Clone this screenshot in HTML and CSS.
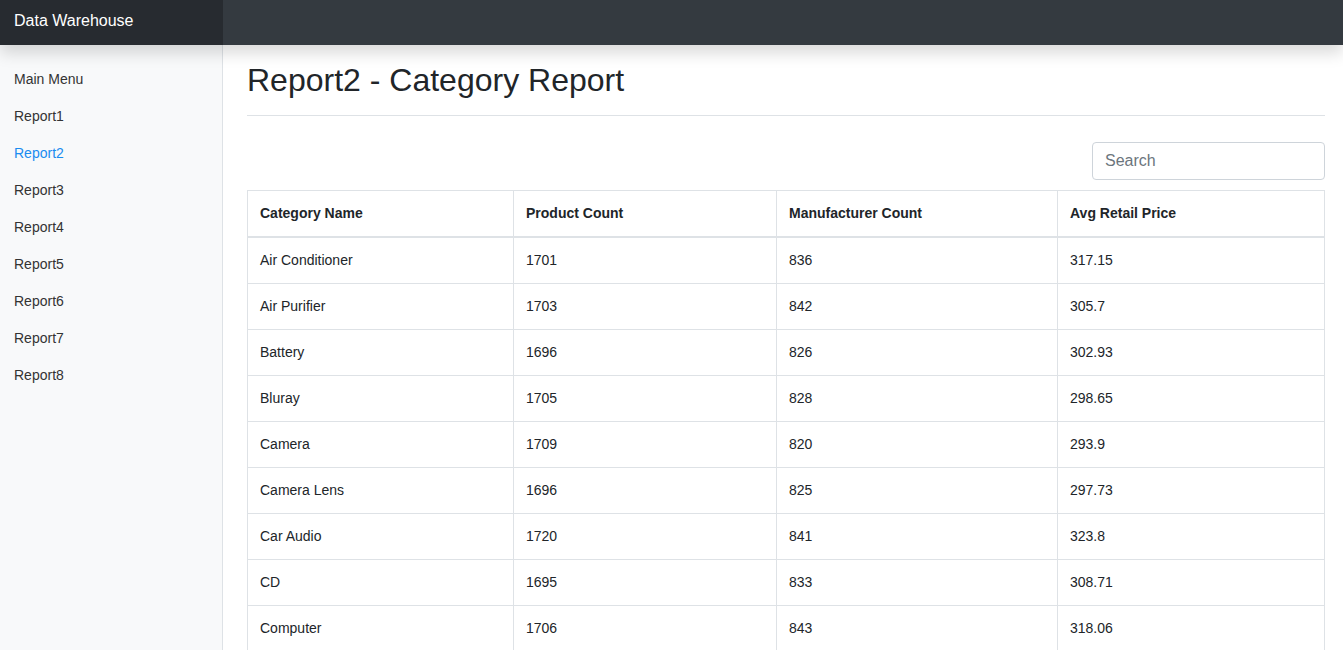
FILE: index.html
```html
<!DOCTYPE html>
<html lang="en">
<head>
<meta charset="utf-8">
<title>Data Warehouse</title>
<link rel="stylesheet" href="styles.css">
</head>
<body>
<header class="navbar">
  <a class="brand" href="#">Data Warehouse</a>
</header>
<div class="layout">
  <nav class="sidebar">
    <ul class="nav">
      <li><a class="nav-link" href="#">Main Menu</a></li>
      <li><a class="nav-link" href="#">Report1</a></li>
      <li><a class="nav-link active" href="#">Report2</a></li>
      <li><a class="nav-link" href="#">Report3</a></li>
      <li><a class="nav-link" href="#">Report4</a></li>
      <li><a class="nav-link" href="#">Report5</a></li>
      <li><a class="nav-link" href="#">Report6</a></li>
      <li><a class="nav-link" href="#">Report7</a></li>
      <li><a class="nav-link" href="#">Report8</a></li>
    </ul>
  </nav>
  <main class="main">
    <div class="page-header">
      <h2 class="title">Report2 - Category Report</h2>
    </div>
    <div class="toolbar">
      <input class="search" type="text" placeholder="Search">
    </div>
    <table class="table">
      <thead>
        <tr><th>Category Name</th><th>Product Count</th><th>Manufacturer Count</th><th>Avg Retail Price</th></tr>
      </thead>
      <tbody>
        <tr><td>Air Conditioner</td><td>1701</td><td>836</td><td>317.15</td></tr>
        <tr><td>Air Purifier</td><td>1703</td><td>842</td><td>305.7</td></tr>
        <tr><td>Battery</td><td>1696</td><td>826</td><td>302.93</td></tr>
        <tr><td>Bluray</td><td>1705</td><td>828</td><td>298.65</td></tr>
        <tr><td>Camera</td><td>1709</td><td>820</td><td>293.9</td></tr>
        <tr><td>Camera Lens</td><td>1696</td><td>825</td><td>297.73</td></tr>
        <tr><td>Car Audio</td><td>1720</td><td>841</td><td>323.8</td></tr>
        <tr><td>CD</td><td>1695</td><td>833</td><td>308.71</td></tr>
        <tr><td>Computer</td><td>1706</td><td>843</td><td>318.06</td></tr>
      </tbody>
    </table>
  </main>
</div>
</body>
</html>
```
FILE: styles.css
```css
* { box-sizing: border-box; }
html, body { margin: 0; padding: 0; }
body {
  font-family: "Liberation Sans", Arial, sans-serif;
  font-size: 16px;
  color: #212529;
  background: #fff;
  overflow: hidden;
}
.navbar {
  position: relative;
  z-index: 10;
  height: 45px;
  display: flex;
  background: #343a40;
  box-shadow: 0 8px 16px rgba(0,0,0,0.15);
}
.brand {
  width: 223px;
  padding: 12px 14px 0;
  line-height: 18px;
  background: rgba(0,0,0,0.25);
  color: #fff;
  font-size: 16px;
  text-decoration: none;
}
.layout {
  display: flex;
  min-height: 605px;
}
.sidebar {
  width: 223px;
  flex: none;
  background: #f8f9fa;
  border-right: 1px solid #dee2e6;
  padding-top: 16px;
}
.nav { list-style: none; margin: 0; padding: 0; }
.nav-link {
  display: block;
  padding: 8px 14px;
  font-size: 14px;
  line-height: 21px;
  color: #333;
  text-decoration: none;
}
.nav-link.active { color: #1a8cf0; }
.main {
  flex: 1;
  padding: 16px 18px 0 24px;
}
.page-header {
  border-bottom: 1px solid #dee2e6;
  padding-bottom: 8px;
  margin-bottom: 26px;
}
.title {
  margin: 0 0 8px;
  font-size: 32px;
  font-weight: 500;
  line-height: 38px;
}
.toolbar {
  display: flex;
  justify-content: flex-end;
  margin-bottom: 10px;
}
.search {
  width: 233px;
  height: 38px;
  padding: 6px 12px;
  font-family: inherit;
  font-size: 16px;
  color: #495057;
  border: 1px solid #ced4da;
  border-radius: 4px;
  background: #fff;
}
.search::placeholder { color: #6c757d; }
.table {
  width: 100%;
  border-collapse: collapse;
  font-size: 14px;
  line-height: 21px;
}
.table th, .table td {
  border: 1px solid #dee2e6;
  padding: 12px;
  text-align: left;
  vertical-align: top;
}
.table th { font-weight: 700; border-bottom-width: 2px; }
.table th:nth-child(1) { width: 266px; }
.table th:nth-child(2) { width: 263px; }
.table th:nth-child(3) { width: 281px; }
```
